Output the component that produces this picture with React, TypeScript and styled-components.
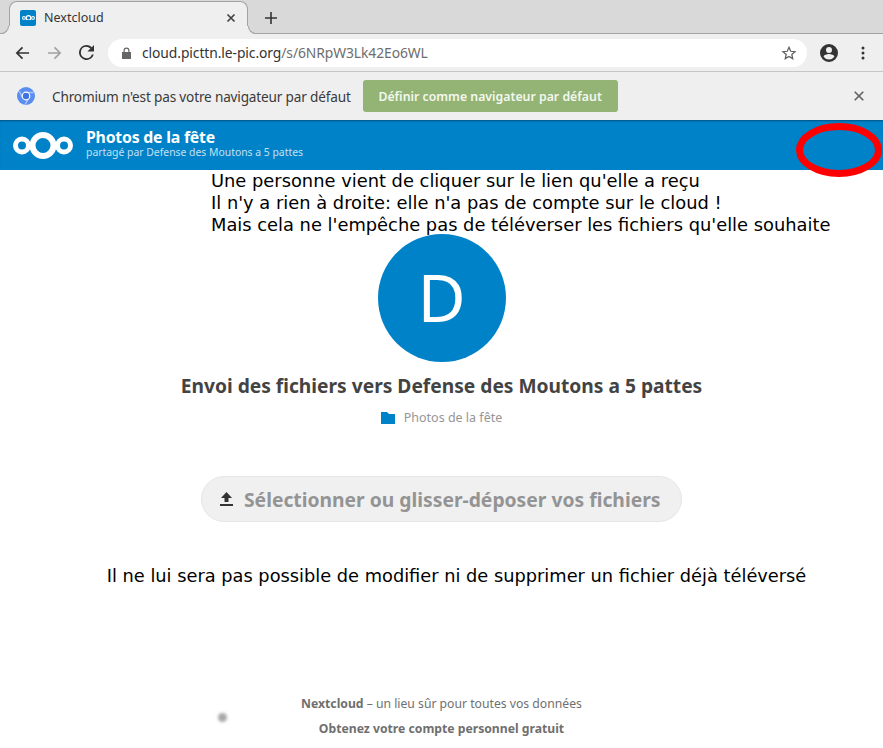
import React from "react";
import styled, { createGlobalStyle } from "styled-components";

const Global = createGlobalStyle`
  html, body { margin: 0; padding: 0; background: #fff; }
  body { width: 883px; height: 748px; overflow: hidden; font-family: "Noto Sans", sans-serif; }
`;

const Page = styled.div`
  position: relative;
  width: 883px;
  height: 748px;
  overflow: hidden;
  display: flex;
  flex-direction: column;
`;

const TabStrip = styled.div`
  height: 33px;
  flex: none;
  background: #d9d9d9;
  border-bottom: 1px solid #a3a3a3;
  display: flex;
  align-items: flex-end;
  padding-left: 9px;
  gap: 11px;
`;

const Tab = styled.div`
  position: relative;
  width: 239px;
  height: 33px;
  margin-bottom: -1px;
  box-sizing: border-box;
  background: #efefef;
  border: 1px solid #a3a3a3;
  border-bottom: none;
  border-radius: 8px 8px 0 0;
  display: flex;
  align-items: center;
  padding: 0 10px 1px;
  color: #333;
  font-size: 12.5px;

  &::before,
  &::after {
    content: "";
    position: absolute;
    bottom: 0;
    width: 8px;
    height: 8px;
    box-sizing: border-box;
    border-bottom: 1px solid #a3a3a3;
  }
  &::before {
    left: -9px;
    border-right: 1px solid #a3a3a3;
    border-radius: 0 0 8px 0;
    box-shadow: 3px 3px 0 3px #efefef;
    clip-path: inset(0 -4px -4px 0);
  }
  &::after {
    right: -9px;
    border-left: 1px solid #a3a3a3;
    border-radius: 0 0 0 8px;
    box-shadow: -3px 3px 0 3px #efefef;
    clip-path: inset(0 0 -4px -4px);
  }
`;

const Favicon = styled.div`
  width: 16px;
  height: 16px;
  border-radius: 2px;
  background: #0082c9;
  display: flex;
  align-items: center;
  justify-content: center;
  margin-right: 8px;
`;

const TabTitle = styled.span`
  flex: 1;
`;

const TabClose = styled.svg`
  display: block;
  margin-right: 1px;
`;

const NewTab = styled.svg`
  display: block;
  margin: 0 0 9px 6px;
`;

const Toolbar = styled.div`
  height: 38px;
  flex: none;
  box-sizing: border-box;
  background: #efefef;
  border-bottom: 1px solid #c6c6c6;
  display: flex;
  align-items: center;
  padding: 0 0 0 15px;
`;

const NavButton = styled.svg`
  display: block;
  flex: none;
  margin-right: 17px;
`;

const UrlBar = styled.div`
  width: 699px;
  height: 28px;
  margin-left: -3px;
  border-radius: 14px;
  background: #fff;
  display: flex;
  align-items: center;
  padding: 0 10px 0 14px;
  box-sizing: border-box;
  font-size: 13.85px;
  letter-spacing: -0.08px;
  color: #333;
`;

const UrlPath = styled.span`
  color: #6d6d6d;
`;

const LockIcon = styled.svg`
  display: block;
  margin-right: 11px;
`;

const UrlText = styled.span`
  flex: 1;
`;

const ToolIcons = styled.div`
  display: flex;
  align-items: center;
  margin-left: 13px;
  gap: 23px;
`;

const InfoBar = styled.div`
  height: 48px;
  flex: none;
  box-sizing: border-box;
  background: #efefef;
  display: flex;
  align-items: center;
  padding: 0 19px 0 17px;
  font-size: 13.6px;
  color: #3a3a3a;
`;

const InfoText = styled.span`
  margin-left: 17px;
  letter-spacing: -0.17px;
`;

const DefaultButton = styled.div`
  margin-left: 12px;
  width: 255px;
  height: 32px;
  border-radius: 3px;
  background: #93b474;
  color: #f4f7ef;
  font-size: 12.3px;
  font-weight: 600;
  display: flex;
  align-items: center;
  justify-content: center;
`;

const InfoClose = styled.svg`
  display: block;
  margin-left: auto;
`;

const Header = styled.header`
  height: 50px;
  flex: none;
  background: #0082c9;
  box-shadow: inset 0 2px 2px -1px rgba(0, 40, 70, 0.55);
  display: flex;
  align-items: center;
  padding-left: 13px;
  color: #fff;
`;

const HeaderTitles = styled.div`
  margin-left: 13px;
  display: flex;
  flex-direction: column;
  margin-top: -3px;
`;

const HeaderTitle = styled.div`
  font-size: 15.8px;
  font-weight: 700;
  line-height: 17px;
  letter-spacing: -0.2px;
`;

const HeaderSub = styled.div`
  font-size: 10.4px;
  line-height: 12px;
  color: #c4e0f2;
`;

const Notes = styled.div`
  padding-left: 211px;
  font-family: "DejaVu Sans", sans-serif;
  font-size: 17.85px;
  line-height: 22px;
  color: #000;
  white-space: nowrap;
`;

const Main = styled.main`
  display: flex;
  flex-direction: column;
  align-items: center;
`;

const Avatar = styled.div`
  width: 128px;
  height: 128px;
  margin-top: -2px;
  border-radius: 50%;
  background: #0082c9;
  color: #fff;
  font-size: 66px;
  line-height: 125px;
  text-align: center;
`;

const Heading = styled.h1`
  margin: 10px 0 0;
  font-size: 19.2px;
  line-height: 27px;
  font-weight: 700;
  color: #434343;
`;

const FolderRow = styled.div`
  margin-top: 10px;
  display: flex;
  align-items: center;
  gap: 9px;
  font-size: 12.5px;
  line-height: 17px;
  color: #969696;
`;

const UploadButton = styled.div`
  margin-top: 50px;
  width: 481px;
  height: 46px;
  box-sizing: border-box;
  border: 1px solid #e6e6e6;
  border-radius: 23px;
  background: #f0f0f0;
  color: #949494;
  font-size: 19.3px;
  font-weight: 700;
  display: flex;
  align-items: center;
  padding-left: 18px;
  gap: 11px;
`;

const Note = styled.div`
  margin: 42px 0 0 30px;
  font-family: "DejaVu Sans", sans-serif;
  font-size: 17.8px;
  line-height: 24px;
  color: #000;
  white-space: nowrap;
`;

const Footer = styled.footer`
  margin-top: 107px;
  display: flex;
  flex-direction: column;
  align-items: center;
  font-size: 12.2px;
  color: #6f6f6f;
`;

const FooterLine = styled.div`
  line-height: 17px;
`;

const FooterLink = styled.div`
  margin-top: 8px;
  line-height: 17px;
  font-weight: 700;
`;

const Ring = styled.svg`
  position: absolute;
  left: 794px;
  top: 122px;
`;

const Speck = styled.div`
  position: absolute;
  left: 218px;
  top: 713px;
  width: 9px;
  height: 9px;
  border-radius: 50%;
  background: #a8a8a8;
  filter: blur(1.5px);
`;

const NextcloudLogo = ({ size }: { size: number }) => (
  <svg width={size} height={(size * 27) / 60} viewBox="0 0 60 27" style={{ display: "block" }}>
    <g fill="none" stroke="#fff">
      <circle cx="30" cy="13.5" r="10.5" strokeWidth="6" />
      <circle cx="9" cy="13.5" r="6.5" strokeWidth="5" />
      <circle cx="51" cy="13.5" r="6.5" strokeWidth="5" />
    </g>
  </svg>
);

export default function App() {
  return (
    <Page>
      <Global />
      <TabStrip>
        <Tab>
          <Favicon>
            <NextcloudLogo size={13} />
          </Favicon>
          <TabTitle>Nextcloud</TabTitle>
          <TabClose width="10" height="10" viewBox="0 0 10 10">
            <path d="M1.5 1.5l7 7M8.5 1.5l-7 7" stroke="#444" strokeWidth="1.7" />
          </TabClose>
        </Tab>
        <NewTab width="12" height="12" viewBox="0 0 12 12">
          <path d="M6 0v12M0 6h12" stroke="#333" strokeWidth="1.6" />
        </NewTab>
      </TabStrip>
      <Toolbar>
        <NavButton width="15" height="14" viewBox="0 0 16 14">
          <path d="M15 7H2M8 1L2 7l6 6" fill="none" stroke="#333" strokeWidth="1.8" />
        </NavButton>
        <NavButton width="15" height="14" viewBox="0 0 16 14">
          <path d="M1 7h13M8 1l6 6-6 6" fill="none" stroke="#a2a2a2" strokeWidth="1.8" />
        </NavButton>
        <NavButton width="15" height="15" viewBox="4 4 16 16">
          <path
            d="M17.65 6.35A7.96 7.96 0 0 0 12 4a8 8 0 1 0 7.73 10h-2.08A6 6 0 1 1 12 6c1.66 0 3.14.69 4.22 1.78L13 11h7V4l-2.35 2.35z"
            fill="#333"
          />
        </NavButton>
        <UrlBar>
          <LockIcon width="9" height="12" viewBox="0 0 9 12">
            <path d="M1.5 5V3.5a3 3 0 0 1 6 0V5H9v7H0V5zm1.2 0h3.6V3.5a1.8 1.8 0 0 0-3.6 0z" fill="#666" />
          </LockIcon>
          <UrlText>
            cloud.picttn.le-pic.org<UrlPath>/s/6NRpW3Lk42Eo6WL</UrlPath>
          </UrlText>
          <svg width="16" height="16" viewBox="0 0 24 24" style={{ display: "block" }}>
            <path
              d="M12 3.5l2.6 5.9 6.4.6-4.8 4.2 1.4 6.3L12 17.2l-5.6 3.3 1.4-6.3L3 10l6.4-.6z"
              fill="none"
              stroke="#5f5f5f"
              strokeWidth="1.9"
            />
          </svg>
        </UrlBar>
        <ToolIcons>
          <svg width="18" height="18" viewBox="0 0 18 18" style={{ display: "block" }}>
            <path
              d="M9 0a9 9 0 1 0 0 18A9 9 0 0 0 9 0zm0 3a3 3 0 1 1 0 6 3 3 0 0 1 0-6zm0 12.6a6.6 6.6 0 0 1-5.4-2.8c0-1.8 3.6-2.8 5.4-2.8s5.4 1 5.4 2.8A6.6 6.6 0 0 1 9 15.6z"
              fill="#333"
            />
          </svg>
          <svg width="4" height="14" viewBox="0 0 4 14" style={{ display: "block" }}>
            <g fill="#333">
              <circle cx="2" cy="2" r="1.5" />
              <circle cx="2" cy="7" r="1.5" />
              <circle cx="2" cy="12" r="1.5" />
            </g>
          </svg>
        </ToolIcons>
      </Toolbar>
      <InfoBar>
        <svg width="18" height="18" viewBox="0 0 18 18" style={{ display: "block" }}>
          <circle cx="9" cy="9" r="9" fill="#5a8df0" />
          <path d="M9 5.5h7.6M5.9 10.8L2.2 4.2M11.9 10.9L8 17.6" stroke="#a9c6fa" strokeWidth="1.3" />
          <circle cx="9" cy="9" r="3.8" fill="#3f73e0" stroke="#fff" strokeWidth="1.2" />
        </svg>
        <InfoText>Chromium n'est pas votre navigateur par défaut</InfoText>
        <DefaultButton>Définir comme navigateur par défaut</DefaultButton>
        <InfoClose width="10" height="10" viewBox="0 0 10 10">
          <path d="M.7.7l8.6 8.6M9.3.7L.7 9.3" stroke="#5f5f5f" strokeWidth="1.6" />
        </InfoClose>
      </InfoBar>
      <Header>
        <NextcloudLogo size={60} />
        <HeaderTitles>
          <HeaderTitle>Photos de la fête</HeaderTitle>
          <HeaderSub>partagé par Defense des Moutons a 5 pattes</HeaderSub>
        </HeaderTitles>
      </Header>
      <Notes>
        Une personne vient de cliquer sur le lien qu'elle a reçu
        <br />
        Il n'y a rien à droite: elle n'a pas de compte sur le cloud !
        <br />
        Mais cela ne l'empêche pas de téléverser les fichiers qu'elle souhaite
      </Notes>
      <Main>
        <Avatar>D</Avatar>
        <Heading>Envoi des fichiers vers Defense des Moutons a 5 pattes</Heading>
        <FolderRow>
          <svg width="14" height="12" viewBox="0 0 14 12" style={{ display: "block" }}>
            <path d="M0 0h6l2 2h6v10H0z" fill="#0082c9" />
          </svg>
          Photos de la fête
        </FolderRow>
        <UploadButton>
          <svg width="13" height="14" viewBox="0 0 13 14" style={{ display: "block" }}>
            <path d="M6.5 0L12 6H8.5v4h-4V6H1zM0 12h13v2H0z" fill="#333" />
          </svg>
          Sélectionner ou glisser-déposer vos fichiers
        </UploadButton>
        <Note>Il ne lui sera pas possible de modifier ni de supprimer un fichier déjà téléversé</Note>
        <Footer>
          <FooterLine>
            <b>Nextcloud</b> – un lieu sûr pour toutes vos données
          </FooterLine>
          <FooterLink>Obtenez votre compte personnel gratuit</FooterLink>
        </Footer>
      </Main>
      <Ring width="89" height="56" viewBox="0 0 89 56">
        <ellipse cx="45" cy="28" rx="39.5" ry="23.5" fill="none" stroke="#ff0000" strokeWidth="7" />
      </Ring>
      <Speck />
    </Page>
  );
}
